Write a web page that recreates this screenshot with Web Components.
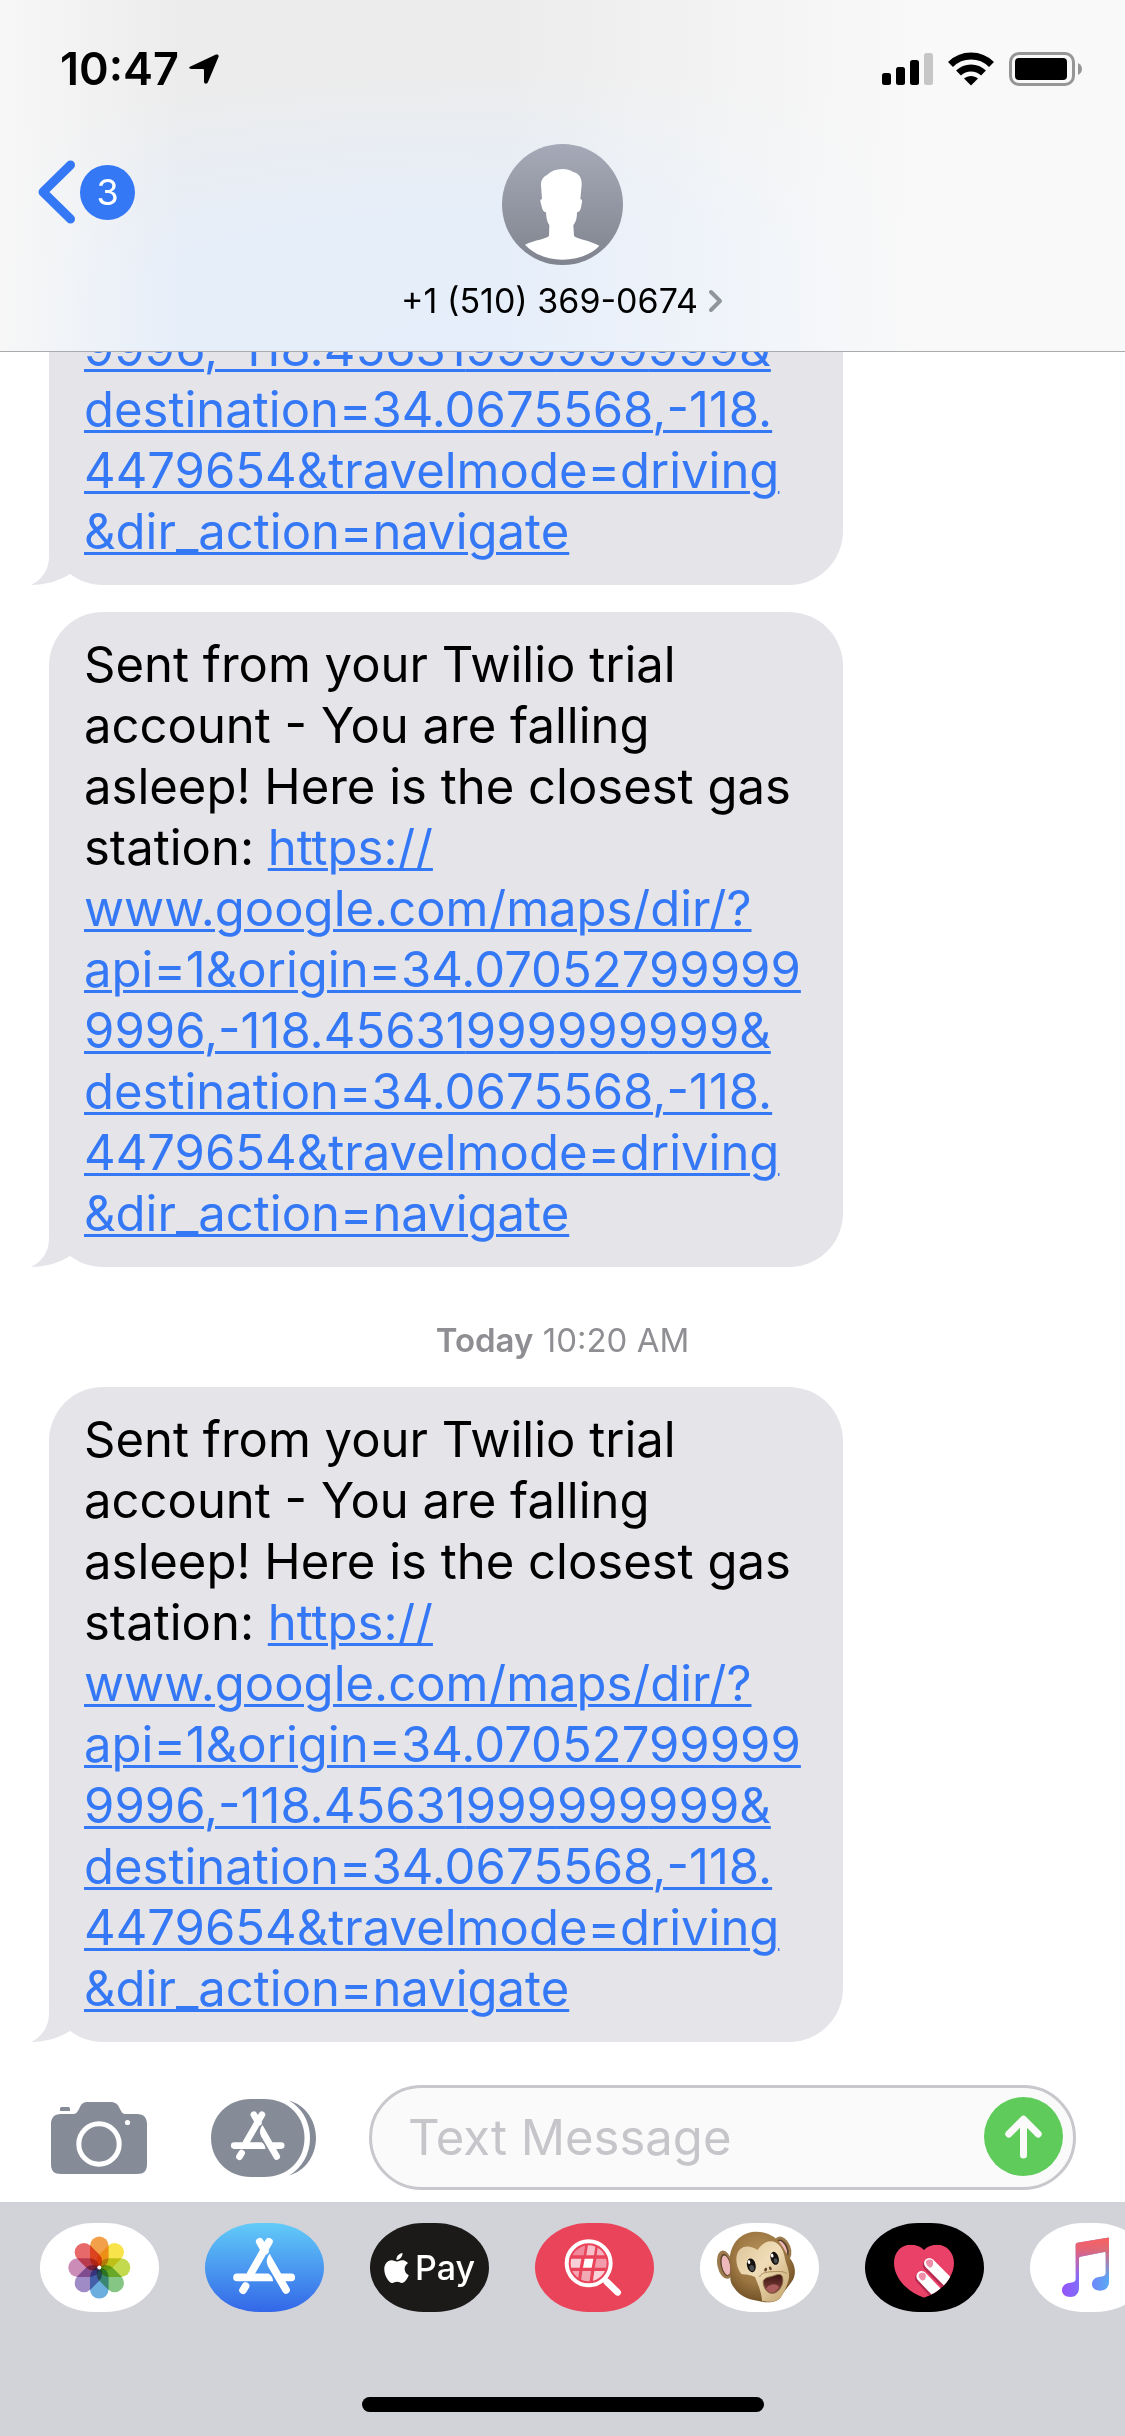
<!DOCTYPE html>
<html lang="en">
<head>
<meta charset="utf-8">
<meta name="viewport" content="width=device-width, initial-scale=1">
<title>Messages</title>
<style>
html, body {
  margin: 0;
  height: 100%;
}
body {
  font-family: Inter, "Liberation Sans", sans-serif;
  color: #000;
  background: #fff;
  --blue: #3478f6;
  --bubble: #e5e4e9;
  --grey: #8e8e93;
  --icon: #868c97;
}
</style>
</head>
<body>
<messages-app>
  <chat-header slot="header" time="10:47" unread="3">+1 (510) 369-0674</chat-header>

  <chat-bubble continued><a href="#maps">9996,-118.45631<wbr>999<wbr>999<wbr>999&amp;<br>destination=34.0675568,-118.<br>4479654&amp;travelmode=driving<br>&amp;dir_action=navigate</a></chat-bubble>

  <chat-bubble>Sent from your Twilio trial<br>account - You are falling<br>asleep! Here is the closest gas<br>station: <a href="#maps">https://<br>www.google.com/maps/dir/?<br>api=1&amp;origin=34.07052799999<br>9996,-118.45631<wbr>999<wbr>999<wbr>999&amp;<br>destination=34.0675568,-118.<br>4479654&amp;travelmode=driving<br>&amp;dir_action=navigate</a></chat-bubble>

  <chat-time day="Today">10:20 AM</chat-time>

  <chat-bubble>Sent from your Twilio trial<br>account - You are falling<br>asleep! Here is the closest gas<br>station: <a href="#maps">https://<br>www.google.com/maps/dir/?<br>api=1&amp;origin=34.07052799999<br>9996,-118.45631<wbr>999<wbr>999<wbr>999&amp;<br>destination=34.0675568,-118.<br>4479654&amp;travelmode=driving<br>&amp;dir_action=navigate</a></chat-bubble>

  <chat-composer slot="footer" placeholder="Text Message"></chat-composer>
  <app-drawer slot="footer"></app-drawer>
</messages-app>

<script>
function attach(el, html) {
  const templ = document.createElement("template");
  templ.innerHTML = html;
  el.attachShadow({ mode: "open" });
  el.shadowRoot.appendChild(templ.content.cloneNode(true));
}

// the "A" made of sticks, drawn on a 119x89 pill
const storeGlyph = `
<g fill="#fff" stroke="none">
  <path d="M64 18.7L45.7 50.7M54.7 18.7L60 28M40.6 63L38 67.3" stroke="#fff" stroke-width="7.6" stroke-linecap="round" fill="none"/>
  <path d="M32 50.6H63.5C66 52 68.2 55 68 58.2H32A3.8 3.8 0 0 1 32 50.6Z"/>
  <path d="M71 50.6H86.3A3.8 3.8 0 0 1 86.3 58.2H75Z"/>
  <path d="M64.7 30.7L84.5 65.3A3.8 3.8 0 0 1 78 69.2L63 43.5C60.8 39 61.5 34.5 64.7 30.7Z"/>
</g>`;

class MessagesApp extends HTMLElement {
  connectedCallback() {
    attach(this, `
<style>
:host {
  display: flex;
  flex-direction: column;
  height: 100vh;
  overflow: hidden;
}
main {
  flex: 1;
  min-height: 0;
  overflow: hidden;
  display: flex;
  flex-direction: column;
  justify-content: flex-end;
}
</style>
<slot name="header"></slot>
<main><slot></slot></main>
<slot name="footer"></slot>`);
  }
}

class StatusBar extends HTMLElement {
  connectedCallback() {
    attach(this, `
<style>
:host {
  display: flex;
  justify-content: space-between;
  align-items: center;
  height: 58px;
  padding: 40px 42px 0 60px;
}
.left, .right {
  display: flex;
  align-items: center;
}
.left { gap: 10px; }
.right { gap: 15px; }
time {
  font-size: 45px;
  line-height: 58px;
  font-weight: 600;
}
svg { display: block; }
</style>
<div class="left">
  <time>${this.getAttribute("time")}</time>
  <svg width="30" height="30" viewBox="0 0 30 30"><path d="M2 12.2L27 .6C29 0 30.2 1.3 29.4 3.3L19 28C18 30.5 15 30 15 27.4V16.5C15 15.4 14.6 15 13.5 15H2.6C-.3 15-.7 13.2 2 12.2Z"/></svg>
</div>
<div class="right">
  <svg width="51" height="34" viewBox="0 0 51 34">
    <rect x="0" y="21" width="9" height="12" rx="2.5"/>
    <rect x="14" y="15" width="9" height="18" rx="2.5"/>
    <rect x="28" y="8" width="9" height="25" rx="2.5"/>
    <rect x="42" y="1" width="9" height="32" rx="2.5" fill="#c6c6c6"/>
  </svg>
  <svg width="46" height="34" viewBox="0 0 46 34">
    <path d="M2.5 12.5A29 29 0 0 1 43.5 12.5M10.5 21A18 18 0 0 1 35.5 21" fill="none" stroke="#000" stroke-width="7"/>
    <path d="M16 26.5C20 23 26 23 30 26.5L23 33.5Z"/>
  </svg>
  <svg width="74" height="34" viewBox="0 0 74 34">
    <rect x="1.5" y="1.5" width="63" height="31" rx="8.5" fill="none" stroke="#969696" stroke-width="3"/>
    <rect x="6" y="6" width="52" height="22" rx="4"/>
    <path d="M69 11C74.3 13.5 74.3 20.5 69 23Z" fill="#969696"/>
  </svg>
</div>`);
  }
}

class ChatHeader extends HTMLElement {
  connectedCallback() {
    attach(this, `
<style>
:host {
  display: block;
  height: 351px;
  border-bottom: 1px solid #a9abae;
  background:
    linear-gradient(90deg, #f7f7f7 0, rgba(247,247,247,0) 16%),
    linear-gradient(90deg, rgba(249,249,249,0) 45%, #f9f9f9 82%),
    radial-gradient(75% 80% at 44% 100%, #e5eefa 0, #e6eef9 50%, rgba(232,236,246,0) 100%),
    #ececec;
}
nav {
  display: grid;
  grid-template-columns: 1fr auto 1fr;
  align-items: start;
  padding: 46px 36px 0;
}
button {
  border: 0;
  padding: 0;
  background: none;
  font: inherit;
  color: inherit;
}
.back {
  display: flex;
  align-items: center;
  gap: 4px;
  justify-self: start;
  margin-top: 16px;
}
.back span {
  width: 55px;
  border-radius: 50%;
  background: var(--blue);
  color: #fff;
  font-size: 36px;
  line-height: 55px;
  text-align: center;
}
.contact {
  display: flex;
  flex-direction: column;
  align-items: center;
  gap: 17px;
}
.name {
  display: flex;
  align-items: center;
  gap: 10px;
  font-size: 34px;
  line-height: 38px;
}
svg { display: block; }
</style>
<status-bar time="${this.getAttribute("time")}"></status-bar>
<nav>
  <button class="back" aria-label="Back">
    <svg width="40" height="64" viewBox="0 0 40 64"><path d="M34.5 5L7 32L34.5 59" fill="none" stroke="var(--blue)" stroke-width="9" stroke-linecap="round" stroke-linejoin="round"/></svg>
    <span>${this.getAttribute("unread")}</span>
  </button>
  <button class="contact">
    <svg width="121" height="121" viewBox="381 72 363 363">
      <defs><linearGradient id="g" x2="0" y2="1"><stop stop-color="#a6aab8"/><stop offset="1" stop-color="#80848e"/></linearGradient></defs>
      <circle cx="562.5" cy="253.5" r="181.5" fill="url(#g)"/>
      <path fill="#fff" d="M562 147C578 147 588 152 596 157C614 161 621 176 620 195L616 238C622 237 622 243 620 251C618 266 616 275 606 277C606 291 604 305 595 316L597 347C604 357 645 361 673 377C648 404 607 419 562 419C517 419 476 402 450 374C480 359 515 357 522 347L523 316C515 305 514 291 513 277C504 275 501 266 498 251C495 243 495 237 501 238L498 195C497 181 504 171 516 165C527 153 543 147 562 147Z"/>
    </svg>
    <div class="name">
      <slot></slot>
      <svg width="16" height="24" viewBox="0 0 16 24"><path d="M3 3L12 12L3 21" fill="none" stroke="#8f949d" stroke-width="4" stroke-linecap="round" stroke-linejoin="round"/></svg>
    </div>
  </button>
</nav>`);
  }
}

class ChatBubble extends HTMLElement {
  connectedCallback() {
    attach(this, `
<style>
:host {
  display: block;
  flex: none;
  position: relative;
  box-sizing: border-box;
  max-width: 794px;
  margin: 27px 49px 0;
  padding: 22px 35px 23px;
  border-radius: 54px;
  background: var(--bubble);
  font-size: 49px;
  line-height: 61px;
  white-space: nowrap;
}
:host([continued]) {
  margin-top: 0;
  border-top-left-radius: 0;
  border-top-right-radius: 0;
}
::slotted(a) {
  color: var(--blue);
  text-decoration: underline;
  text-decoration-thickness: 3px;
  text-underline-offset: 3px;
}
.tail {
  position: absolute;
  left: -18px;
  bottom: 0;
}
</style>
<slot></slot>
<svg class="tail" width="40" height="54" viewBox="0 0 40 54"><path fill="var(--bubble)" d="M18 0V26C18 40 9 50 0 54C14 54 28 50 39 43V0Z"/></svg>`);
  }
}

class ChatTime extends HTMLElement {
  connectedCallback() {
    attach(this, `
<style>
:host {
  display: block;
  padding: 55px 0 2px;
  color: var(--grey);
  font-size: 33px;
  line-height: 36px;
  text-align: center;
}
b { font-weight: 600; }
</style>
<b>${this.getAttribute("day")}</b> <slot></slot>`);
  }
}

class ChatComposer extends HTMLElement {
  connectedCallback() {
    attach(this, `
<style>
:host { display: block; }
form {
  display: flex;
  align-items: center;
  padding: 43px 49px 12px 51px;
}
button {
  flex: none;
  border: 0;
  padding: 0;
  background: none;
}
.camera { margin-right: 64px; }
.apps { margin-right: 52px; }
.field {
  flex: 1;
  min-width: 0;
  display: flex;
  align-items: center;
  box-sizing: border-box;
  height: 105px;
  padding: 0 10px 2px 36px;
  border: 3px solid #c7c7cc;
  border-radius: 53px;
  background: #fafafa;
}
input {
  flex: 1;
  min-width: 0;
  border: 0;
  padding: 2px 0 0;
  outline: 0;
  background: none;
  font: inherit;
  font-size: 49px;
  line-height: 61px;
}
input::placeholder {
  color: #c5c5ca;
  opacity: 1;
}
svg { display: block; }
</style>
<form>
  <button class="camera" type="button" aria-label="Camera">
    <svg width="96" height="72" viewBox="0 0 96 72">
      <path fill="var(--icon)" d="M10 12H22C25 12 26.5 10 28 7C30 2.5 31.5 0 37 0H59C65 0 67 2.5 69 7C70.5 10 71.5 12 75 12H86C93 12 96 16 96 22V62C96 69 93 72 86 72H10C3 72 0 69 0 62V22C0 16 3 12 10 12Z"/>
      <path fill="var(--icon)" d="M9 9V6.5Q9 5 10.5 5H17.5Q19 5 19 6.5V9Z"/>
      <circle cx="48" cy="42" r="20.2" fill="none" stroke="#fff" stroke-width="5"/>
      <circle cx="76.5" cy="20.5" r="2.6" fill="#fff"/>
    </svg>
  </button>
  <button class="apps" type="button" aria-label="Apps">
    <svg width="106" height="78" viewBox="0 0 106 78">
      <path fill="var(--icon)" d="M40 0H53C77 0 93.5 17 93.5 39C93.5 61 77 78 53 78H40C17 78 0 61 0 39C0 17 17 0 40 0Z"/>
      <path fill="var(--icon)" d="M78 1.5C94 6 105 21 105 39C105 57 94 72 78 76.5C91 69 99 55 99 39C99 23 91 9 78 1.5Z"/>
      <g transform="translate(-4.5 -.5) scale(.866)">${storeGlyph}</g>
    </svg>
  </button>
  <div class="field">
    <input type="text" aria-label="Message" placeholder="${this.getAttribute("placeholder")}">
    <button type="submit" aria-label="Send">
      <svg width="79" height="79" viewBox="0 0 79 79">
        <circle cx="39.5" cy="39.5" r="39.5" fill="#5fcb5b"/>
        <path d="M39.5 58V23M24.8 37L39.5 22.3L54.2 37" fill="none" stroke="#fafafa" stroke-width="7" stroke-linecap="round" stroke-linejoin="round"/>
      </svg>
    </button>
  </div>
</form>`);
    this.shadowRoot.querySelector("form").addEventListener("submit", (e) => e.preventDefault());
  }
}

class AppPill extends HTMLElement {
  connectedCallback() {
    attach(this, `
<style>
:host {
  display: block;
  flex: none;
}
button {
  display: flex;
  align-items: center;
  justify-content: center;
  width: 119px;
  height: 89px;
  padding: 0;
  border: 0;
  border-radius: 54px / 45px;
  overflow: hidden;
  background: var(--pill, #fff);
  font: inherit;
}
</style>
<button aria-label="${this.getAttribute("label")}"><slot></slot></button>`);
  }
}

const petals = ["#f2a14a", "#f8e34a", "#c3d94e", "#86c684", "#6caedd", "#9f8cc6", "#cb8cb8", "#e8696a"]
  .map((c, i) => `<rect x="-9.3" y="-31" width="18.6" height="31" rx="9.3" fill="${c}" transform="rotate(${i * 45})"/>`)
  .join("");

class AppDrawer extends HTMLElement {
  connectedCallback() {
    attach(this, `
<style>
:host {
  display: flex;
  flex-direction: column;
  align-items: center;
  justify-content: space-between;
  box-sizing: border-box;
  height: 234px;
  padding: 21px 0 24px;
  overflow: hidden;
  background: #d2d3d8;
}
.apps {
  align-self: stretch;
  display: flex;
  gap: 46px;
  padding-left: 40px;
}
.petals rect { mix-blend-mode: multiply; }
.petals { isolation: isolate; }
.store { --pill: linear-gradient(#62cbf8, #3367e8); }
.pay { --pill: #1b1a18; }
.images { --pill: #ea445a; }
.touch { --pill: #000; }
.pay span {
  margin-left: 6px;
  color: #fff;
  font-size: 34px;
  line-height: 44px;
  font-weight: 500;
}
.home {
  width: 402px;
  height: 15px;
  border-radius: 8px;
  background: #000;
}
svg {
  display: block;
  flex: none;
}
</style>
<div class="apps">
  <app-pill label="Photos">
    <svg width="119" height="89" viewBox="0 0 119 89">
      <g class="petals" transform="translate(59.3 44.6)">${petals}</g>
      <circle cx="59.3" cy="44.6" r="2" fill="#fff"/>
    </svg>
  </app-pill>
  <app-pill class="store" label="App Store">
    <svg width="119" height="89" viewBox="0 0 119 89">${storeGlyph}</svg>
  </app-pill>
  <app-pill class="pay" label="Apple Pay">
    <svg width="25" height="30" viewBox="2 0 20 24"><path fill="#fff" d="M12.152 6.896c-.948 0-2.415-1.078-3.96-1.04-2.04.027-3.91 1.183-4.961 3.014-2.117 3.675-.546 9.103 1.519 12.09 1.013 1.454 2.208 3.09 3.792 3.039 1.52-.065 2.09-.987 3.935-.987 1.831 0 2.35.987 3.96.948 1.637-.026 2.676-1.48 3.676-2.948 1.156-1.688 1.636-3.325 1.662-3.415-.039-.013-3.182-1.221-3.22-4.857-.026-3.04 2.48-4.494 2.597-4.559-1.429-2.09-3.623-2.324-4.39-2.376-2-.156-3.675 1.09-4.61 1.09zM15.53 3.83c.843-1.012 1.4-2.427 1.245-3.83-1.207.052-2.662.805-3.532 1.818-.78.896-1.454 2.338-1.273 3.714 1.338.104 2.715-.688 3.559-1.701"/></svg>
    <span>Pay</span>
  </app-pill>
  <app-pill class="images" label="Images">
    <svg width="119" height="89" viewBox="525 460 357 267">
      <defs><clipPath id="lens"><circle cx="686" cy="581" r="54"/></clipPath></defs>
      <g clip-path="url(#lens)">
        <path fill="#f0899b" d="M630 525H676L671 557H630Z"/>
        <path fill="#f7c0ca" d="M684 525H707L702 557H679Z"/>
        <path fill="#f4b0bd" d="M714 525H745V557H710Z"/>
        <path fill="#f9d0d8" d="M630 567H664L659 594H630Z"/>
        <path fill="#fff" d="M674 567H700L695 594H669Z"/>
        <path fill="#f19bab" d="M709 567H745V594H704Z"/>
        <path fill="#f4a5b3" d="M630 604H658L652 640H630Z"/>
        <path fill="#f2a9b6" d="M667 604H693L688 640H662Z"/>
        <path fill="#fad3da" d="M703 604H745V640H698Z"/>
      </g>
      <circle cx="686" cy="581" r="66" fill="none" stroke="#fff" stroke-width="12"/>
      <path d="M733 629L739 635" stroke="#fff" stroke-width="17"/>
      <path d="M741 637L773 668" stroke="#fff" stroke-width="20" stroke-linecap="round"/>
    </svg>
  </app-pill>
  <app-pill label="Animoji">
    <svg width="119" height="89" viewBox="30 460 357 267">
      <defs>
        <radialGradient id="fur" cx=".45" cy=".35" r=".65"><stop stop-color="#b8935a"/><stop offset=".6" stop-color="#9c7642"/><stop offset="1" stop-color="#715126"/></radialGradient>
        <linearGradient id="skin" x2="1" y2="1"><stop stop-color="#dcc499"/><stop offset=".45" stop-color="#f0ddb8"/><stop offset="1" stop-color="#c2a26b"/></linearGradient>
        <linearGradient id="throat" x2="0" y2="1"><stop stop-color="#3c1512"/><stop offset="1" stop-color="#8a4642"/></linearGradient>
      </defs>
      <ellipse cx="105" cy="585" rx="23" ry="43" fill="#9b7b4e" transform="rotate(-12 105 585)"/>
      <ellipse cx="107" cy="586" rx="15" ry="34" fill="#5b4227" transform="rotate(-12 107 586)"/>
      <ellipse cx="108" cy="587" rx="12" ry="30" fill="#eeb9ba" transform="rotate(-12 108 587)"/>
      <ellipse cx="278" cy="537" rx="24" ry="38" fill="#9b7b4e" transform="rotate(-22 278 537)"/>
      <ellipse cx="277" cy="538" rx="17" ry="30" fill="#5b4227" transform="rotate(-22 277 538)"/>
      <ellipse cx="276" cy="539" rx="13" ry="26" fill="#eeb9ba" transform="rotate(-22 276 539)"/>
      <path fill="url(#fur)" d="M195 486C230 485 262 501 277 530C288 548 292 556 305 573C318 592 318 619 305 636C294 652 283 664 273 681C262 700 230 701 202 693C172 690 146 676 133 655C120 640 118 625 124 600C115 575 118 545 134 520C147 500 170 487 195 486Z"/>
      <path fill="url(#skin)" d="M154 613C136 590 133 554 151 538C166 525 185 530 203 541C212 528 224 515 242 515C264 515 279 536 284 562C286 577 293 590 296 606C301 631 289 654 275 679C262 700 235 698 216 693C215 671 205 645 195 622C181 614 166 616 154 613Z"/>
      <path fill="none" stroke="#a88854" stroke-width="3" d="M209 622C212 611 226 607 248 606C270 605 282 605 291 612"/>
      <g transform="rotate(-12 184 587)"><ellipse cx="184" cy="587" rx="13" ry="21" fill="#15120f"/><ellipse cx="184" cy="595" rx="7" ry="9" fill="#4c4f50"/><ellipse cx="179" cy="576" rx="4" ry="6" fill="#fff"/></g>
      <g transform="rotate(-16 254 566)"><ellipse cx="254" cy="566" rx="12" ry="20" fill="#15120f"/><ellipse cx="255" cy="574" rx="6" ry="8" fill="#4c4f50"/><ellipse cx="249" cy="556" rx="4" ry="6" fill="#fff"/></g>
      <ellipse cx="227" cy="600" rx="4" ry="6" fill="#65482a" transform="rotate(25 227 600)"/>
      <ellipse cx="241" cy="596" rx="4" ry="6" fill="#65482a" transform="rotate(-25 241 596)"/>
      <path fill="url(#throat)" stroke="#8a6943" stroke-width="3" d="M220 641C217 628 230 623 243 621C257 617 271 608 277 621C283 640 271 662 256 669C240 676 224 665 220 641Z"/>
      <path fill="#a85c5b" d="M228 657C237 643 260 639 267 652C256 672 239 674 228 657Z"/>
    </svg>
  </app-pill>
  <app-pill class="touch" label="Digital Touch">
    <svg width="119" height="89" viewBox="525 460 357 267">
      <defs><clipPath id="heart"><path d="M702 541C691 529 677 525 662 525C632 525 612 549 612 580C612 627 655 668 702 684C749 668 792 627 792 580C792 549 770 525 742 525C727 525 713 529 702 541Z"/></clipPath></defs>
      <g clip-path="url(#heart)">
        <rect x="600" y="515" width="200" height="180" fill="#ea4169"/>
        <path d="M715 586L795 668M692 625L762 700" stroke="#b52b50" stroke-width="34" stroke-linecap="round"/>
        <path d="M718 581L798 661M695 620L765 694" stroke="#fff" stroke-width="32" stroke-linecap="round"/>
        <path fill="#f08eaa" d="M708 575C713 568 724 568 729 574C731 585 727 593 720 594C712 590 707 584 708 575ZM686 615C691 608 702 608 707 614C709 625 705 632 698 633C690 629 685 623 686 615Z"/>
      </g>
    </svg>
  </app-pill>
  <app-pill label="Music">
    <svg width="119" height="89" viewBox="1020 460 357 267">
      <defs>
        <linearGradient id="cool"><stop stop-color="#9654f8"/><stop offset=".45" stop-color="#7b74fb"/><stop offset="1" stop-color="#58aaf4"/></linearGradient>
        <linearGradient id="warm" x2="0" y2="1"><stop stop-color="#fa5f60"/><stop offset=".2" stop-color="#f5605f" stop-opacity=".85"/><stop offset=".7" stop-color="#f06080" stop-opacity="0"/></linearGradient>
        <path id="note" d="M1162 519L1252 504Q1257 503 1257 508V636C1257 653 1246 663 1231 663C1217 663 1206 656 1206 644C1206 630 1216 622 1231 621C1243 620 1247 618 1247 608V550Q1247 546 1243 547L1171 561Q1167 562 1167 566V655C1167 672 1156 682 1141 682C1127 682 1116 675 1116 662C1116 648 1126 640 1141 639C1153 638 1157 636 1157 626V525Q1157 520 1162 519Z"/>
      </defs>
      <use href="#note" fill="url(#cool)"/>
      <use href="#note" fill="url(#warm)"/>
    </svg>
  </app-pill>
</div>
<div class="home"></div>`);
  }
}

window.customElements.define("status-bar", StatusBar);
window.customElements.define("chat-header", ChatHeader);
window.customElements.define("chat-bubble", ChatBubble);
window.customElements.define("chat-time", ChatTime);
window.customElements.define("chat-composer", ChatComposer);
window.customElements.define("app-pill", AppPill);
window.customElements.define("app-drawer", AppDrawer);
window.customElements.define("messages-app", MessagesApp);
</script>
</body>
</html>
